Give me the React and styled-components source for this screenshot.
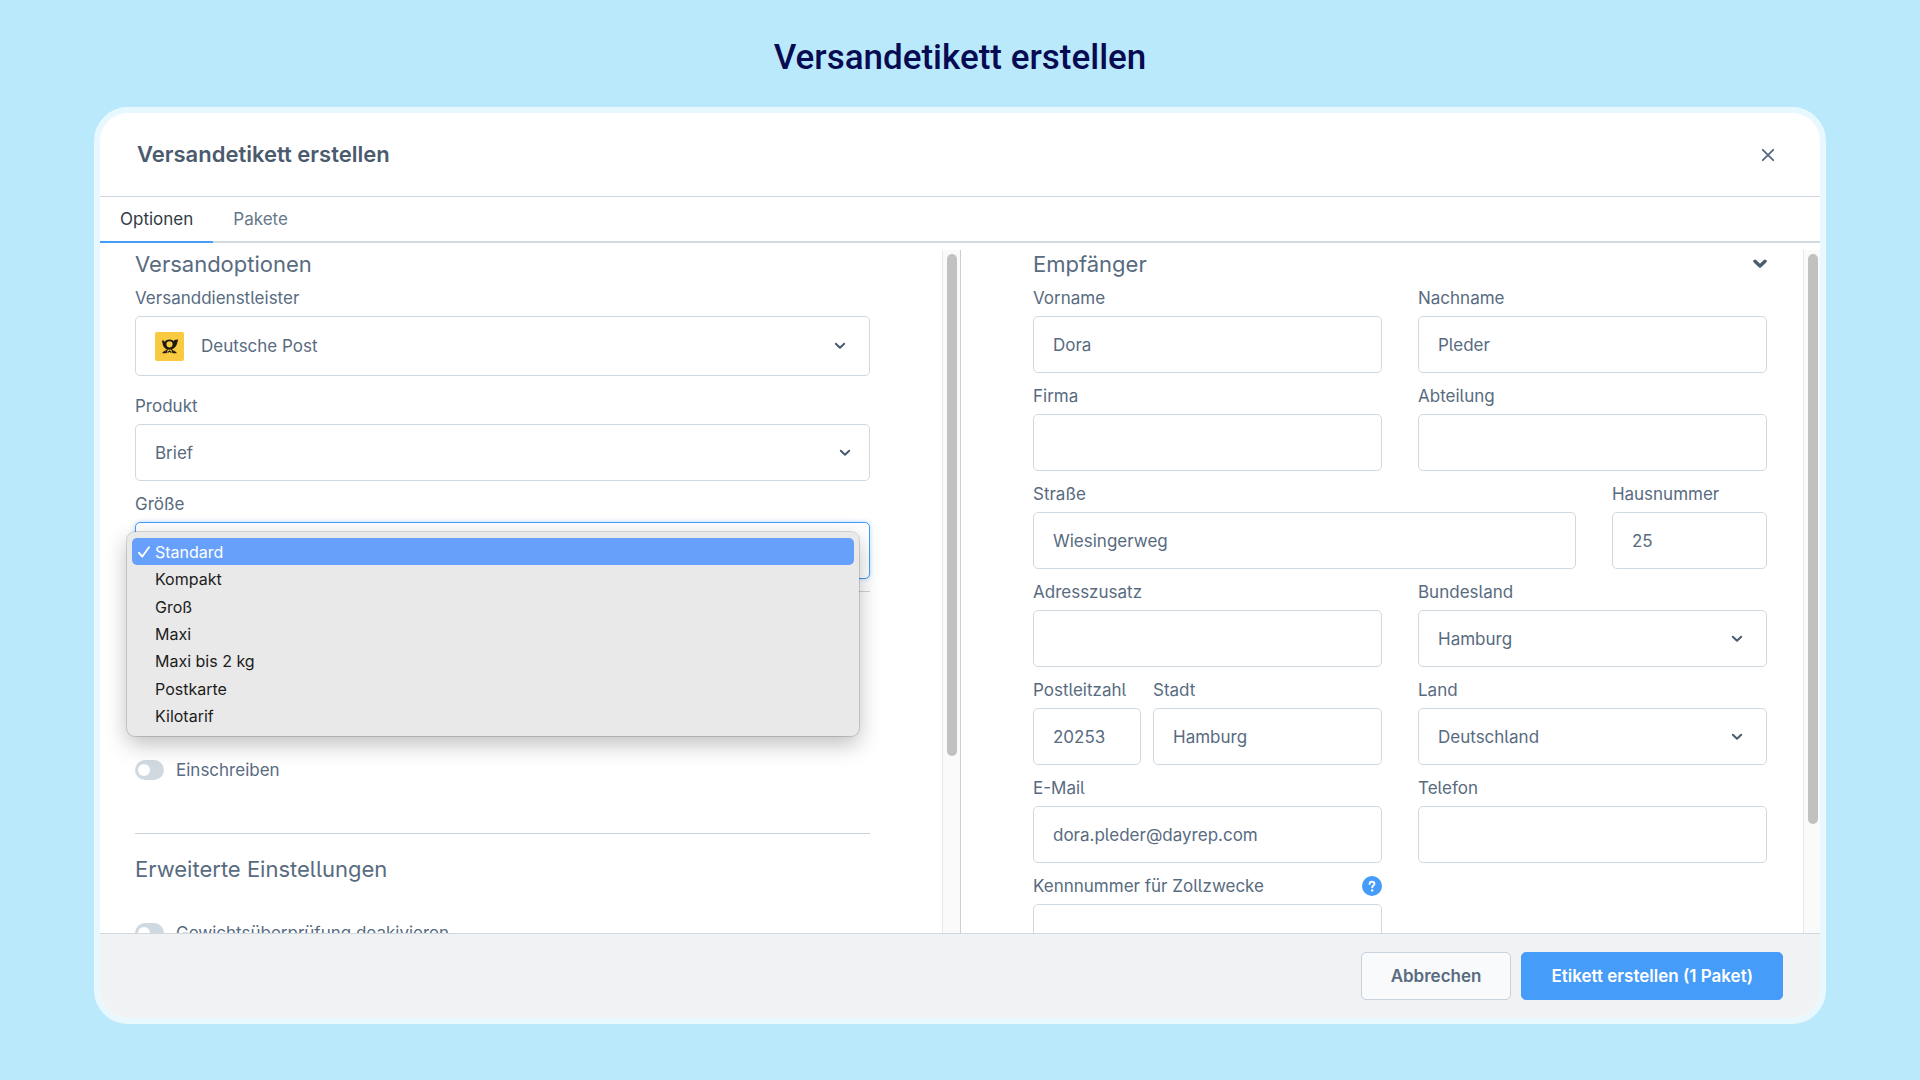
import React, { useState } from "react";
import styled, { createGlobalStyle, css } from "styled-components";

const text = "#586b7f";
const line = "#d1d9e0";
const blue = "#459cf9";

const GlobalStyle = createGlobalStyle`
  * {
    box-sizing: border-box;
  }
  body {
    margin: 0;
    background: #bbe9fc;
    color: ${text};
    font-family: Inter, "Liberation Sans", sans-serif;
    font-size: 17px;
    line-height: 20px;
  }
  button, input, select {
    font: inherit;
    color: inherit;
  }
  label, input, select, h3 {
    font-feature-settings: "cv05";
  }
`;

const Page = styled.div`
  height: 100vh;
  display: flex;
  flex-direction: column;
  padding: 0 94px 56px;
`;
const PageTitle = styled.h1`
  margin: 0;
  padding-top: 38px;
  height: 107px;
  flex: none;
  text-align: center;
  color: #060b52;
  font-family: Roboto, sans-serif;
  font-size: 35px;
  font-weight: 500;
  line-height: 40px;
`;
const Modal = styled.main`
  flex: 1;
  min-height: 0;
  display: flex;
  flex-direction: column;
  border: 6px solid #e8f8ff;
  border-radius: 34px;
  background: #fff;
  overflow: hidden;
`;
const ModalHeader = styled.header`
  height: 84px;
  flex: none;
  display: flex;
  justify-content: space-between;
  align-items: center;
  padding: 0 42px 0 37px;
  border-bottom: 1px solid ${line};
`;
const ModalTitle = styled.h2`
  margin: 0;
  padding-bottom: 2px;
  color: #4b5b6e;
  font-size: 22px;
  font-weight: 600;
  line-height: 28px;
`;
const IconButton = styled.button`
  display: flex;
  padding: 0;
  border: none;
  background: none;
  cursor: pointer;
`;
const Tabs = styled.nav`
  height: 46px;
  flex: none;
  display: flex;
  box-shadow: inset 0 -2px ${line};
`;
const Tab = styled.button`
  padding: 0 20px;
  border: none;
  border-bottom: 2px solid ${({ $active }) => ($active ? blue : "transparent")};
  background: none;
  color: ${({ $active }) => ($active ? "#303a45" : "#66788b")};
  cursor: pointer;
`;
const Body = styled.div`
  flex: 1;
  min-height: 0;
  display: grid;
  grid-template-columns: 1fr 1fr;
  padding-top: 7px;
`;
const Pane = styled.section`
  display: flex;
  min-width: 0;
  overflow: hidden;
  & + & {
    border-left: 1px solid #c5d0da;
  }
`;
const PaneContent = styled.div`
  flex: 1;
  min-width: 0;
  padding: ${({ $right }) => ($right ? "0 36px 0 72px" : "0 72px 0 35px")};
`;
const Track = styled.div`
  width: ${({ $wide }) => ($wide ? 18 : 17)}px;
  flex: none;
  padding: 4px 0 0 4px;
  border-left: 1px solid #e8e8e8;
  background: #fafafa;
`;
const Thumb = styled.div`
  width: 10px;
  height: ${({ $size }) => $size}%;
  border-radius: 5px;
  background: #c1c1c1;
`;
const SectionHead = styled.div`
  display: flex;
  justify-content: space-between;
  align-items: center;
  margin-bottom: 10px;
`;
const SectionTitle = styled.h3`
  margin: 0;
  font-size: 22px;
  font-weight: 400;
  line-height: 28px;
`;
const FieldBox = styled.div`
  min-width: 0;
  margin-bottom: ${({ $last, $loose }) => ($last ? 12 : $loose ? 20 : 13)}px;
`;
const LabelRow = styled.div`
  display: flex;
  justify-content: space-between;
  align-items: center;
  height: 20px;
  margin-bottom: 8px;
`;
const control = css`
  display: block;
  width: 100%;
  height: 57px;
  padding: 0 19px;
  border: 1px solid ${line};
  border-radius: 5px;
  background: #fff;
  outline: none;
`;
const Input = styled.input`
  ${control}
`;
const SelectBox = styled.div`
  position: relative;
`;
const Select = styled.select`
  ${control}
  appearance: none;
  ${({ $logo }) =>
    $logo &&
    css`
      height: 60px;
      padding-left: 65px;
    `}
  ${({ $open }) =>
    $open &&
    css`
      border-color: ${blue};
      box-shadow: 0 0 4px rgba(69, 156, 249, 0.4);
    `}
`;
const Arrow = styled.svg`
  position: absolute;
  top: 50%;
  right: ${({ $near }) => ($near ? 19 : 24)}px;
  margin-top: -4px;
  pointer-events: none;
`;
const Logo = styled.svg`
  position: absolute;
  top: 16px;
  left: 20px;
  pointer-events: none;
`;
const Menu = styled.ul`
  position: absolute;
  z-index: 2;
  top: 10px;
  left: -8px;
  right: 11px;
  height: 204px;
  margin: 0;
  padding: 6px 5px;
  display: flex;
  flex-direction: column;
  list-style: none;
  border-radius: 8px;
  background: #e9e9e9;
  box-shadow: 0 0 0 1px rgba(0, 0, 0, 0.14), 0 8px 22px rgba(0, 0, 0, 0.26);
`;
const Option = styled.li`
  flex: 1;
  display: flex;
  align-items: center;
  padding-left: ${({ $selected }) => ($selected ? 6 : 23)}px;
  gap: 5px;
  border-radius: 5px;
  font-size: 16px;
  font-weight: 400;
  color: ${({ $selected }) => ($selected ? "#fff" : "#1c1c1c")};
  background: ${({ $selected }) => ($selected ? "#67a0fb" : "none")};
  cursor: default;
`;
const Divider = styled.hr`
  height: 1px;
  margin: 0;
  border: none;
  background: #ccd4db;
`;
const SwitchLabel = styled.label`
  display: flex;
  align-items: center;
  gap: 12px;
  height: 20px;
  white-space: nowrap;
`;
const Switch = styled.input`
  appearance: none;
  width: 29px;
  height: 20px;
  flex: none;
  margin: 0;
  padding: 4px 3px;
  border-radius: 10px;
  background: #d1d9e0;
  &::before {
    content: "";
    display: block;
    width: 12px;
    height: 12px;
    border-radius: 50%;
    background: #fff;
  }
  &:checked {
    padding-left: 14px;
    background: ${blue};
  }
`;
const ServiceOptions = styled.div`
  padding: 168px 0 53px;
`;
const AdvancedOptions = styled.div`
  padding-top: 21px;
  ${SectionHead} {
    margin-bottom: 40px;
  }
`;
const FormRow = styled.div`
  display: grid;
  grid-template-columns: ${({ $columns }) => $columns || "1fr 1fr"};
  column-gap: ${({ $gap }) => $gap || 36}px;
`;
const Footer = styled.footer`
  height: 85px;
  flex: none;
  display: flex;
  justify-content: flex-end;
  align-items: center;
  gap: 10px;
  padding-right: 37px;
  border-top: 1px solid ${line};
  background: #f0f2f4;
`;
const Button = styled.button`
  height: 48px;
  padding: 0 29px;
  border: 1px solid ${({ $primary }) => ($primary ? blue : "#c9d3dc")};
  border-radius: 5px;
  background: ${({ $primary }) => ($primary ? blue : "#f9fafc")};
  color: ${({ $primary }) => ($primary ? "#fff" : text)};
  font-weight: 600;
  cursor: pointer;
`;

const Chevron = (props) => (
  <Arrow width="12" height="8" viewBox="0 0 12 8" fill="none" {...props}>
    <path
      d="M1.8 1.8 6 5.8l4.2-4"
      stroke="#4a5d70"
      strokeWidth="2"
      strokeLinecap="round"
      strokeLinejoin="round"
    />
  </Arrow>
);

const PostLogo = () => (
  <Logo width="29" height="29" viewBox="0 0 29 29">
    <rect width="29" height="29" rx="2" fill="#f9c940" />
    <path
      d="M6.8 9 8.300 8.200l1.500 1.500c1.100-1.500 2.700-2.300 4.700-2.300 1.900 0 3.300.7 4.300 1.900l.5-1.300 3.900-.5c-.4 1.200-.6 2.200-1 3.600-1 3.900-3.600 6.600-7.500 6.600-4.300 0-6.600-2.500-7.100-5.900-.1-1.100-.3-1.900-.8-2.800Zm7.700.2a3.100 3.100 0 1 0 0 6.200 3.100 3.100 0 0 0 0-6.200Z"
      fillRule="evenodd"
      fill="#1c1a10"
    />
    <path
      d="M12.800 17.200c-.8 1.500-2 2.200-4.100 2.300M16.200 17.200c.8 1.500 2 2.200 4.100 2.300M7.600 20.700h3.300l1.200-1.600M21.400 20.700h-3.300l-1.200-1.600M12.600 20.600l1.900-1.500 1.900 1.500"
      fill="none"
      stroke="#1c1a10"
      strokeWidth="1.200"
    />
  </Logo>
);

const TextField = ({ id, label, value = "", type = "text", help }) => (
  <FieldBox>
    <LabelRow>
      <label htmlFor={id}>{label}</label>
      {help && (
        <IconButton type="button" aria-label="Hilfe">
          <svg width="20" height="20" viewBox="0 0 20 20" fill="none">
            <circle cx="10" cy="10" r="10" fill={blue} />
            <path
              d="M7.600 8.100c0-1.500 1-2.400 2.400-2.400s2.400.9 2.400 2.200c0 1.600-2.200 1.700-2.200 3.400"
              stroke="#fff"
              strokeWidth="1.900"
              strokeLinecap="round"
            />
            <circle cx="10.200" cy="14.400" r="1.200" fill="#fff" />
          </svg>
        </IconButton>
      )}
    </LabelRow>
    <Input id={id} name={id} type={type} defaultValue={value} />
  </FieldBox>
);

const SelectField = ({ id, label, value, near, logo, open, last, children }) => (
  <FieldBox $loose={logo} $last={last}>
    <LabelRow>
      <label htmlFor={id}>{label}</label>
    </LabelRow>
    <SelectBox>
      <Select id={id} name={id} $logo={logo} $open={open}>
        <option>{value}</option>
      </Select>
      <Chevron $near={near} />
      {logo && <PostLogo />}
      {children}
    </SelectBox>
  </FieldBox>
);

const sizes = [
  "Standard",
  "Kompakt",
  "Groß",
  "Maxi",
  "Maxi bis 2 kg",
  "Postkarte",
  "Kilotarif",
];

const ShippingOptions = () => {
  const [size, setSize] = useState("Standard");

  return (
    <Pane>
      <PaneContent>
        <SectionHead>
          <SectionTitle>Versandoptionen</SectionTitle>
        </SectionHead>
        <SelectField id="carrier" label="Versanddienstleister" value="Deutsche Post" logo />
        <SelectField id="product" label="Produkt" value="Brief" near />
        <SelectField id="size" label="Größe" value={size} near open last>
          <Menu role="listbox" aria-label="Größe">
            {sizes.map((s) => (
              <Option
                key={s}
                role="option"
                aria-selected={s === size}
                $selected={s === size}
                onClick={() => setSize(s)}
              >
                {s === size && (
                  <svg width="12" height="12" viewBox="0 0 12 12" fill="none">
                    <path
                      d="M1 6.800 4.300 10.500 11 1.300"
                      stroke="#fff"
                      strokeWidth="1.900"
                      strokeLinecap="round"
                      strokeLinejoin="round"
                    />
                  </svg>
                )}
                {s}
              </Option>
            ))}
          </Menu>
        </SelectField>
        <Divider />
        <ServiceOptions>
          <SwitchLabel>
            <Switch type="checkbox" />
            Einschreiben
          </SwitchLabel>
        </ServiceOptions>
        <Divider />
        <AdvancedOptions>
          <SectionHead>
            <SectionTitle>Erweiterte Einstellungen</SectionTitle>
          </SectionHead>
          <SwitchLabel>
            <Switch type="checkbox" />
            Gewichtsüberprüfung deakivieren
          </SwitchLabel>
        </AdvancedOptions>
      </PaneContent>
      <Track $wide>
        <Thumb $size={74} />
      </Track>
    </Pane>
  );
};

const Recipient = () => (
  <Pane>
    <PaneContent $right>
      <SectionHead>
        <SectionTitle>Empfänger</SectionTitle>
        <IconButton type="button" aria-label="Einklappen">
          <svg width="14" height="10" viewBox="0 0 14 10" fill="none">
            <path
              d="M2 2.200 7 7l5-4.800"
              stroke="#4a5d70"
              strokeWidth="3.400"
              strokeLinecap="round"
              strokeLinejoin="round"
            />
          </svg>
        </IconButton>
      </SectionHead>
      <FormRow>
        <TextField id="firstName" label="Vorname" value="Dora" />
        <TextField id="lastName" label="Nachname" value="Pleder" />
        <TextField id="company" label="Firma" />
        <TextField id="department" label="Abteilung" />
      </FormRow>
      <FormRow $columns="7fr 2fr">
        <TextField id="street" label="Straße" value="Wiesingerweg" />
        <TextField id="houseNumber" label="Hausnummer" value="25" />
      </FormRow>
      <FormRow>
        <TextField id="addressExtra" label="Adresszusatz" />
        <SelectField id="state" label="Bundesland" value="Hamburg" />
        <FormRow $columns="108px 1fr" $gap={12}>
          <TextField id="zip" label="Postleitzahl" value="20253" />
          <TextField id="city" label="Stadt" value="Hamburg" />
        </FormRow>
        <SelectField id="country" label="Land" value="Deutschland" />
        <TextField id="email" label="E-Mail" type="email" value="dora.pleder@dayrep.com" />
        <TextField id="phone" label="Telefon" type="tel" />
        <TextField id="customsId" label="Kennnummer für Zollzwecke" help />
      </FormRow>
    </PaneContent>
    <Track>
      <Thumb $size={84} />
    </Track>
  </Pane>
);

const App = () => (
  <>
    <GlobalStyle />
    <Page>
      <PageTitle>Versandetikett erstellen</PageTitle>
      <Modal>
        <ModalHeader>
          <ModalTitle>Versandetikett erstellen</ModalTitle>
          <IconButton type="button" aria-label="Schließen">
            <svg width="20" height="20" viewBox="0 0 20 20" fill="none">
              <path
                d="m4.800 4.800 10.400 10.400M15.200 4.800 4.800 15.200"
                stroke={text}
                strokeWidth="1.900"
                strokeLinecap="round"
              />
            </svg>
          </IconButton>
        </ModalHeader>
        <Tabs>
          <Tab type="button" $active>
            Optionen
          </Tab>
          <Tab type="button">Pakete</Tab>
        </Tabs>
        <Body>
          <ShippingOptions />
          <Recipient />
        </Body>
        <Footer>
          <Button type="button">Abbrechen</Button>
          <Button type="button" $primary>
            Etikett erstellen (1 Paket)
          </Button>
        </Footer>
      </Modal>
    </Page>
  </>
);

export default App;
